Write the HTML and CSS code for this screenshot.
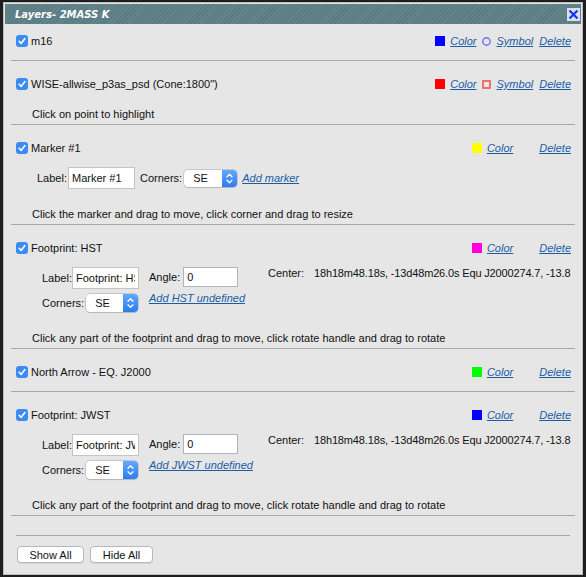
FILE: index.html
```
<!DOCTYPE html>
<html>
<head>
<meta charset="utf-8">
<title>Layers</title>
<link rel="stylesheet" href="styles.css">
</head>
<body>
<div class="dialog">
  <div class="titlebar">
    <span class="title">Layers- 2MASS K</span>
    <span class="close"><svg width="13" height="13" viewBox="0 0 13 13"><rect width="13" height="13" fill="#d8e0ea"/><path d="M2.5 2.5 L10.5 10.5 M10.5 2.5 L2.5 10.5" stroke="#1533f5" stroke-width="2.2" fill="none"/></svg></span>
  </div>
  <div class="content">
    <div class="layer first simple">
      <div class="head">
        <span class="cb"><svg class="check" width="12" height="12" viewBox="0 0 12 12"><rect width="12" height="12" rx="3" fill="#3a8bf4"/><path d="M3.2 6.3 L5.1 8.4 L8.9 3.6" stroke="#fff" stroke-width="1.6" fill="none" stroke-linecap="round" stroke-linejoin="round"/></svg>m16</span>
        <span class="acts">
          <span class="swatch sw-blue"></span>
          <a class="lk">Color</a>
          <svg class="sym" width="9" height="9" viewBox="0 0 9 9"><circle cx="4.5" cy="4.5" r="3.7" fill="none" stroke="#6f6ff8" stroke-width="1.4"/></svg>
          <a class="lk">Symbol</a>
          <a class="lk del">Delete</a>
        </span>
      </div>
    </div>
    <hr class="sep">
    <div class="layer">
      <div class="head">
        <span class="cb"><svg class="check" width="12" height="12" viewBox="0 0 12 12"><rect width="12" height="12" rx="3" fill="#3a8bf4"/><path d="M3.2 6.3 L5.1 8.4 L8.9 3.6" stroke="#fff" stroke-width="1.6" fill="none" stroke-linecap="round" stroke-linejoin="round"/></svg>WISE-allwise_p3as_psd (Cone:1800")</span>
        <span class="acts">
          <span class="swatch sw-red"></span>
          <a class="lk">Color</a>
          <svg class="sym" width="9" height="9" viewBox="0 0 9 9"><rect x="1" y="1" width="7" height="7" fill="none" stroke="#ee6464" stroke-width="1.8"/></svg>
          <a class="lk">Symbol</a>
          <a class="lk del">Delete</a>
        </span>
      </div>
      <div class="desc">Click on point to highlight</div>
    </div>
    <hr class="sep">
    <div class="layer">
      <div class="head">
        <span class="cb"><svg class="check" width="12" height="12" viewBox="0 0 12 12"><rect width="12" height="12" rx="3" fill="#3a8bf4"/><path d="M3.2 6.3 L5.1 8.4 L8.9 3.6" stroke="#fff" stroke-width="1.6" fill="none" stroke-linecap="round" stroke-linejoin="round"/></svg>Marker #1</span>
        <span class="acts">
          <span class="swatch sw-yellow"></span>
          <a class="lk">Color</a>
          <span class="nosym"></span>
          <a class="lk del">Delete</a>
        </span>
      </div>
      <div class="fields">
        <span>Label:</span>
        <input class="txt txt-marker" type="text" value="Marker #1">
        <span class="lbl2">Corners:</span>
        <span class="select sel-marker"><span class="sel-val">SE</span><span class="sel-btn"><svg width="15" height="17" viewBox="0 0 15 17"><path d="M5 6.8 L7.5 4.3 L10 6.8 M5 10.2 L7.5 12.7 L10 10.2" stroke="#fff" stroke-width="1.3" fill="none" stroke-linecap="round" stroke-linejoin="round"/></svg></span></span>
        <a class="lk add">Add marker</a>
      </div>
      <div class="desc after-fields">Click the marker and drag to move, click corner and drag to resize</div>
    </div>
    <hr class="sep">
    <div class="layer">
      <div class="head">
        <span class="cb"><svg class="check" width="12" height="12" viewBox="0 0 12 12"><rect width="12" height="12" rx="3" fill="#3a8bf4"/><path d="M3.2 6.3 L5.1 8.4 L8.9 3.6" stroke="#fff" stroke-width="1.6" fill="none" stroke-linecap="round" stroke-linejoin="round"/></svg>Footprint: HST</span>
        <span class="acts">
          <span class="swatch sw-magenta"></span>
          <a class="lk">Color</a>
          <span class="nosym"></span>
          <a class="lk del">Delete</a>
        </span>
      </div>
      <div class="fp">
        <div class="col1">
          <div class="row"><span>Label:</span><input class="txt txt-fp" type="text" value="Footprint: HST"></div>
          <div class="row"><span>Corners:</span><span class="select sel-fp"><span class="sel-val">SE</span><span class="sel-btn"><svg width="15" height="18" viewBox="0 0 15 18"><path d="M5 7.2 L7.5 4.7 L10 7.2 M5 10.8 L7.5 13.3 L10 10.8" stroke="#fff" stroke-width="1.3" fill="none" stroke-linecap="round" stroke-linejoin="round"/></svg></span></span></div>
        </div>
        <div class="col2">
          <div class="row2"><span>Angle:</span><input class="txt txt-angle" type="text" value="0"></div>
          <a class="lk addfp">Add HST undefined</a>
        </div>
        <div class="col3">
          <span class="clabel">Center:</span>
          <span class="coords">18h18m48.18s, -13d48m26.0s Equ J2000274.7, -13.8</span>
        </div>
      </div>
      <div class="desc after-fp">Click any part of the footprint and drag to move, click rotate handle and drag to rotate</div>
    </div>
    <hr class="sep">
    <div class="layer simple">
      <div class="head">
        <span class="cb"><svg class="check" width="12" height="12" viewBox="0 0 12 12"><rect width="12" height="12" rx="3" fill="#3a8bf4"/><path d="M3.2 6.3 L5.1 8.4 L8.9 3.6" stroke="#fff" stroke-width="1.6" fill="none" stroke-linecap="round" stroke-linejoin="round"/></svg>North Arrow - EQ. J2000</span>
        <span class="acts">
          <span class="swatch sw-green"></span>
          <a class="lk">Color</a>
          <span class="nosym"></span>
          <a class="lk del">Delete</a>
        </span>
      </div>
    </div>
    <hr class="sep">
    <div class="layer">
      <div class="head">
        <span class="cb"><svg class="check" width="12" height="12" viewBox="0 0 12 12"><rect width="12" height="12" rx="3" fill="#3a8bf4"/><path d="M3.2 6.3 L5.1 8.4 L8.9 3.6" stroke="#fff" stroke-width="1.6" fill="none" stroke-linecap="round" stroke-linejoin="round"/></svg>Footprint: JWST</span>
        <span class="acts">
          <span class="swatch sw-blue"></span>
          <a class="lk">Color</a>
          <span class="nosym"></span>
          <a class="lk del">Delete</a>
        </span>
      </div>
      <div class="fp">
        <div class="col1">
          <div class="row"><span>Label:</span><input class="txt txt-fp" type="text" value="Footprint: JWST"></div>
          <div class="row"><span>Corners:</span><span class="select sel-fp"><span class="sel-val">SE</span><span class="sel-btn"><svg width="15" height="18" viewBox="0 0 15 18"><path d="M5 7.2 L7.5 4.7 L10 7.2 M5 10.8 L7.5 13.3 L10 10.8" stroke="#fff" stroke-width="1.3" fill="none" stroke-linecap="round" stroke-linejoin="round"/></svg></span></span></div>
        </div>
        <div class="col2">
          <div class="row2"><span>Angle:</span><input class="txt txt-angle" type="text" value="0"></div>
          <a class="lk addfp">Add JWST undefined</a>
        </div>
        <div class="col3">
          <span class="clabel">Center:</span>
          <span class="coords">18h18m48.18s, -13d48m26.0s Equ J2000274.7, -13.8</span>
        </div>
      </div>
      <div class="desc after-fp">Click any part of the footprint and drag to move, click rotate handle and drag to rotate</div>
    </div>
    <hr class="sep">
    <hr class="sep2">
    <div class="buttons">
      <button class="btn btn-show">Show All</button>
      <button class="btn btn-hide">Hide All</button>
    </div>
  </div>
</div>
</body>
</html>
```

FILE: styles.css
```
* { box-sizing: border-box; }

body {
  margin: 0;
  background: #1e1e1e;
  font: 11px "Liberation Sans", Arial, sans-serif;
  color: #111;
}

.dialog {
  margin: 2px 0 0 3px;
  width: 580px;
  height: 573px;
  border: 1px solid #bdbdbd;
  padding: 1px;
  background: #e6e6e6;
  display: flex;
  flex-direction: column;
}

.titlebar {
  height: 20px;
  flex: none;
  background: repeating-linear-gradient(135deg, #5b7c83 0 2px, #658790 2px 3px);
  display: flex;
  align-items: center;
  justify-content: space-between;
  padding: 0 1px 0 10px;
}

.title {
  font: italic bold 10px "DejaVu Sans", sans-serif;
  color: #fff;
}

.close svg { display: block; }

.content { padding: 0 6px; }

.layer {
  padding: 13px 4px 0 5px;
}
.layer.first { padding-top: 7px; }
.layer.simple { padding-bottom: 9px; }

.sep {
  border: 0;
  margin: 0;
  height: 1px;
  background: #a8a8a8;
}

.head {
  height: 20px;
  display: flex;
  align-items: center;
  justify-content: space-between;
  white-space: nowrap;
}

.cb { display: flex; align-items: center; }
.check { display: block; margin-right: 3px; flex: none; }

.acts { display: flex; align-items: center; }

.swatch { width: 10px; height: 10px; display: block; }
.sw-blue { background: #0000ff; }
.sw-red { background: #ff0000; }
.sw-yellow { background: #ffff00; }
.sw-magenta { background: #ff00dd; }
.sw-green { background: #00ff00; }

.lk {
  color: #1b5ca5;
  font-style: italic;
  text-decoration: underline;
  white-space: nowrap;
}
.swatch + .lk { margin-left: 5px; }
.sym { display: block; margin-left: 5px; }
.sym + .lk { margin-left: 6px; }
.nosym { width: 14px; margin-left: 6px; }
.lk.del { margin-left: 6px; }

.desc {
  margin-left: 16px;
  margin-top: 10px;
  height: 20px;
  line-height: 20px;
  white-space: nowrap;
}
.desc.after-fields { margin-top: 15px; }
.desc.after-fp { margin-top: 14px; }

.txt {
  border: 1px solid #c4c4c4;
  background: #fff;
  font: 11px "Liberation Sans", Arial, sans-serif;
  color: #111;
  padding: 0 3px;
  margin: 0;
  border-radius: 0;
  outline: none;
}

.fields {
  margin: 9px 0 0 21px;
  height: 22px;
  display: flex;
  align-items: center;
}
.txt-marker { width: 67px; height: 22px; margin-left: 1px; }
.lbl2 { margin-left: 5px; }
.sel-marker { margin-left: 2px; width: 53px; height: 17px; }
.lk.add { margin-left: 5px; }

.select {
  display: flex;
  background: #fff;
  border-radius: 4px;
  box-shadow: 0 0 0 0.5px #a9a9a9, 0 1px 1px rgba(0,0,0,0.15);
  overflow: hidden;
}
.sel-val { flex: 1; padding-left: 9px; display: flex; align-items: center; }
.sel-btn {
  width: 15px;
  background: linear-gradient(#62a9fc, #2b7cf0);
  display: flex;
  align-items: center;
  justify-content: center;
}
.sel-btn svg { display: block; }

.fp {
  display: flex;
  margin: 9px 0 0 26px;
  white-space: nowrap;
}
.col1 {
  width: 107px;
  flex: none;
  display: flex;
  flex-direction: column;
  gap: 3px;
}
.row { height: 22px; display: flex; align-items: center; }
.txt-fp { width: 67px; height: 22px; margin-left: 0; }
.sel-fp { margin-left: 2px; width: 52px; height: 18px; }

.col2 {
  width: 119px;
  flex: none;
  display: flex;
  flex-direction: column;
  align-items: flex-start;
}
.row2 { height: 20px; display: flex; align-items: center; }
.txt-angle { width: 55px; height: 20px; margin-left: 3px; border-color: #aeb4c4; }
.lk.addfp { margin-top: 4px; line-height: 14px; }

.col3 { display: flex; line-height: 12px; }
.clabel { width: 46px; flex: none; }
.coords { letter-spacing: -0.15px; }

.sep2 {
  border: 0;
  margin: 19px 5px 0;
  height: 1px;
  background: #a8a8a8;
}

.buttons {
  padding: 10px 0 0 6px;
  display: flex;
  gap: 6px;
}
.btn {
  height: 17px;
  padding: 0;
  background: #fff;
  border: 1px solid #b8b8b8;
  border-radius: 4px;
  font: 11px "Liberation Sans", Arial, sans-serif;
  color: #111;
  box-shadow: 0 1px 0 rgba(0,0,0,0.08);
}
.btn-show { width: 67px; }
.btn-hide { width: 63px; }
```
